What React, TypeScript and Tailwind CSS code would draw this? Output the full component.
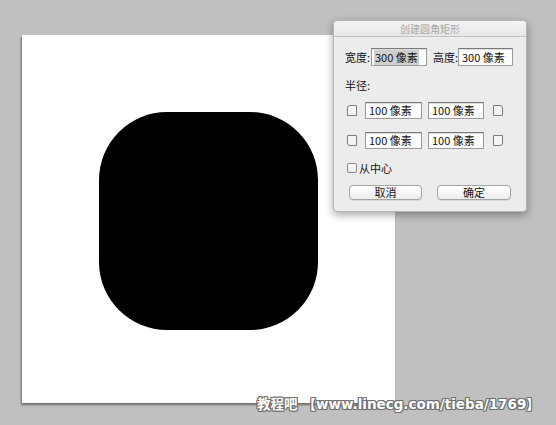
import React from "react";

const cjk = { fontFamily: '"Lucida Grande", "Noto Sans CJK SC", "Noto Sans", sans-serif' };

function Field({ value, w, selected }: { value: string; w: string; selected?: boolean }) {
  return (
    <div
      className={`${w} shrink-0 h-full bg-white border border-[#9a9a9a] border-t-[#7a7a7a] shadow-[inset_0_1px_1px_rgba(0,0,0,0.15)] flex items-center pl-[2px] text-[11px] leading-none text-[#111] whitespace-nowrap`}
    >
      <span className={selected ? "bg-[#cfcfcf] px-[1px] py-[2px]" : "px-[1px]"}>{value}</span>
    </div>
  );
}

function Corner({ r }: { r: string }) {
  return <div className={`w-[10px] h-[11px] shrink-0 border border-[#7c7c7c] bg-[#f4f4f4] ${r}`} />;
}

export default function App() {
  return (
    <div className="relative w-[556px] h-[425px] bg-[#c0c0c0] overflow-hidden" style={cjk}>
      {/* canvas */}
      <div className="ml-[22px] pt-[35px]">
        <div className="w-[373px] h-[368px] bg-white shadow-[-1px_2px_2px_rgba(0,0,0,0.45)] flex justify-center pt-[77px]">
          <div className="w-[219px] h-[218px] bg-black rounded-[68px]" />
        </div>
      </div>

      {/* dialog */}
      <div className="absolute left-[333px] top-[20px] w-[194px] h-[192px] bg-[#ececec] border border-[#b4b4b4] rounded-[4px] shadow-[0_3px_8px_rgba(0,0,0,0.35)] flex flex-col">
        <div className="h-[16px] shrink-0 border-b border-[#c4c4c4] bg-gradient-to-b from-[#f4f4f4] to-[#e6e6e6] rounded-t-[4px] flex items-center justify-center text-[10px] text-[#a6a6a6] leading-none">
          创建圆角矩形
        </div>

        <div className="flex items-center h-[18px] mt-[11px] pl-[11px] text-[11px] text-[#111] leading-none whitespace-nowrap">
          <span className="w-[26px] shrink-0">宽度:</span>
          <Field value="300 像素" w="w-[56px]" selected />
          <span className="ml-[6px] w-[25px] shrink-0">高度:</span>
          <Field value="300 像素" w="w-[55px]" />
        </div>

        <div className="h-[14px] mt-[12px] pl-[11px] flex items-center text-[11px] text-[#111] leading-none">半径:</div>

        <div className="flex items-center h-[17px] mt-[10px] pl-[13px] text-[11px]">
          <Corner r="rounded-tl-[3px]" />
          <div className="ml-[8px] h-full flex">
            <Field value="100 像素" w="w-[57px]" />
          </div>
          <div className="ml-[6px] h-full flex">
            <Field value="100 像素" w="w-[56px]" />
          </div>
          <div className="ml-[9px]">
            <Corner r="rounded-tr-[3px]" />
          </div>
        </div>

        <div className="flex items-center h-[17px] mt-[13px] pl-[13px] text-[11px]">
          <Corner r="rounded-bl-[3px]" />
          <div className="ml-[8px] h-full flex">
            <Field value="100 像素" w="w-[57px]" />
          </div>
          <div className="ml-[6px] h-full flex">
            <Field value="100 像素" w="w-[56px]" />
          </div>
          <div className="ml-[9px]">
            <Corner r="rounded-br-[3px]" />
          </div>
        </div>

        <div className="flex items-center h-[12px] mt-[13px] pl-[13px] text-[11px] text-[#111] leading-none">
          <div className="w-[10px] h-[10px] border border-[#8a8a8a] rounded-[2px] bg-gradient-to-b from-white to-[#e8e8e8]" />
          <span className="ml-[2px]">从中心</span>
        </div>

        <div className="flex h-[15px] mt-[11px] pl-[15px] text-[11px] text-[#111] leading-none">
          <div className="w-[73px] h-full rounded-[4px] border border-[#a4a4a4] bg-gradient-to-b from-white to-[#ededed] shadow-[0_1px_0_rgba(0,0,0,0.08)] flex items-center justify-center">
            取消
          </div>
          <div className="ml-[15px] w-[74px] h-full rounded-[4px] border border-[#a4a4a4] bg-gradient-to-b from-white to-[#ededed] shadow-[0_1px_0_rgba(0,0,0,0.08)] flex items-center justify-center">
            确定
          </div>
        </div>
      </div>

      {/* watermark */}
      <div
        className="absolute left-[257px] top-[398px] text-[13.5px] font-bold text-white leading-none whitespace-nowrap flex"
        style={{
          fontFamily: '"DejaVu Sans", "Noto Sans CJK SC", sans-serif',
          textShadow:
            "1px 0 0 #707070, -1px 0 0 #707070, 0 1px 0 #707070, 0 -1px 0 #707070, 1px 1px 0 #707070, -1px -1px 0 #707070, 1px -1px 0 #707070, -1px 1px 0 #707070",
        }}
      >
        <span>教程吧</span>
        <span className="ml-[5px]">【www.linecg.com/tieba/1769】</span>
      </div>
    </div>
  );
}
